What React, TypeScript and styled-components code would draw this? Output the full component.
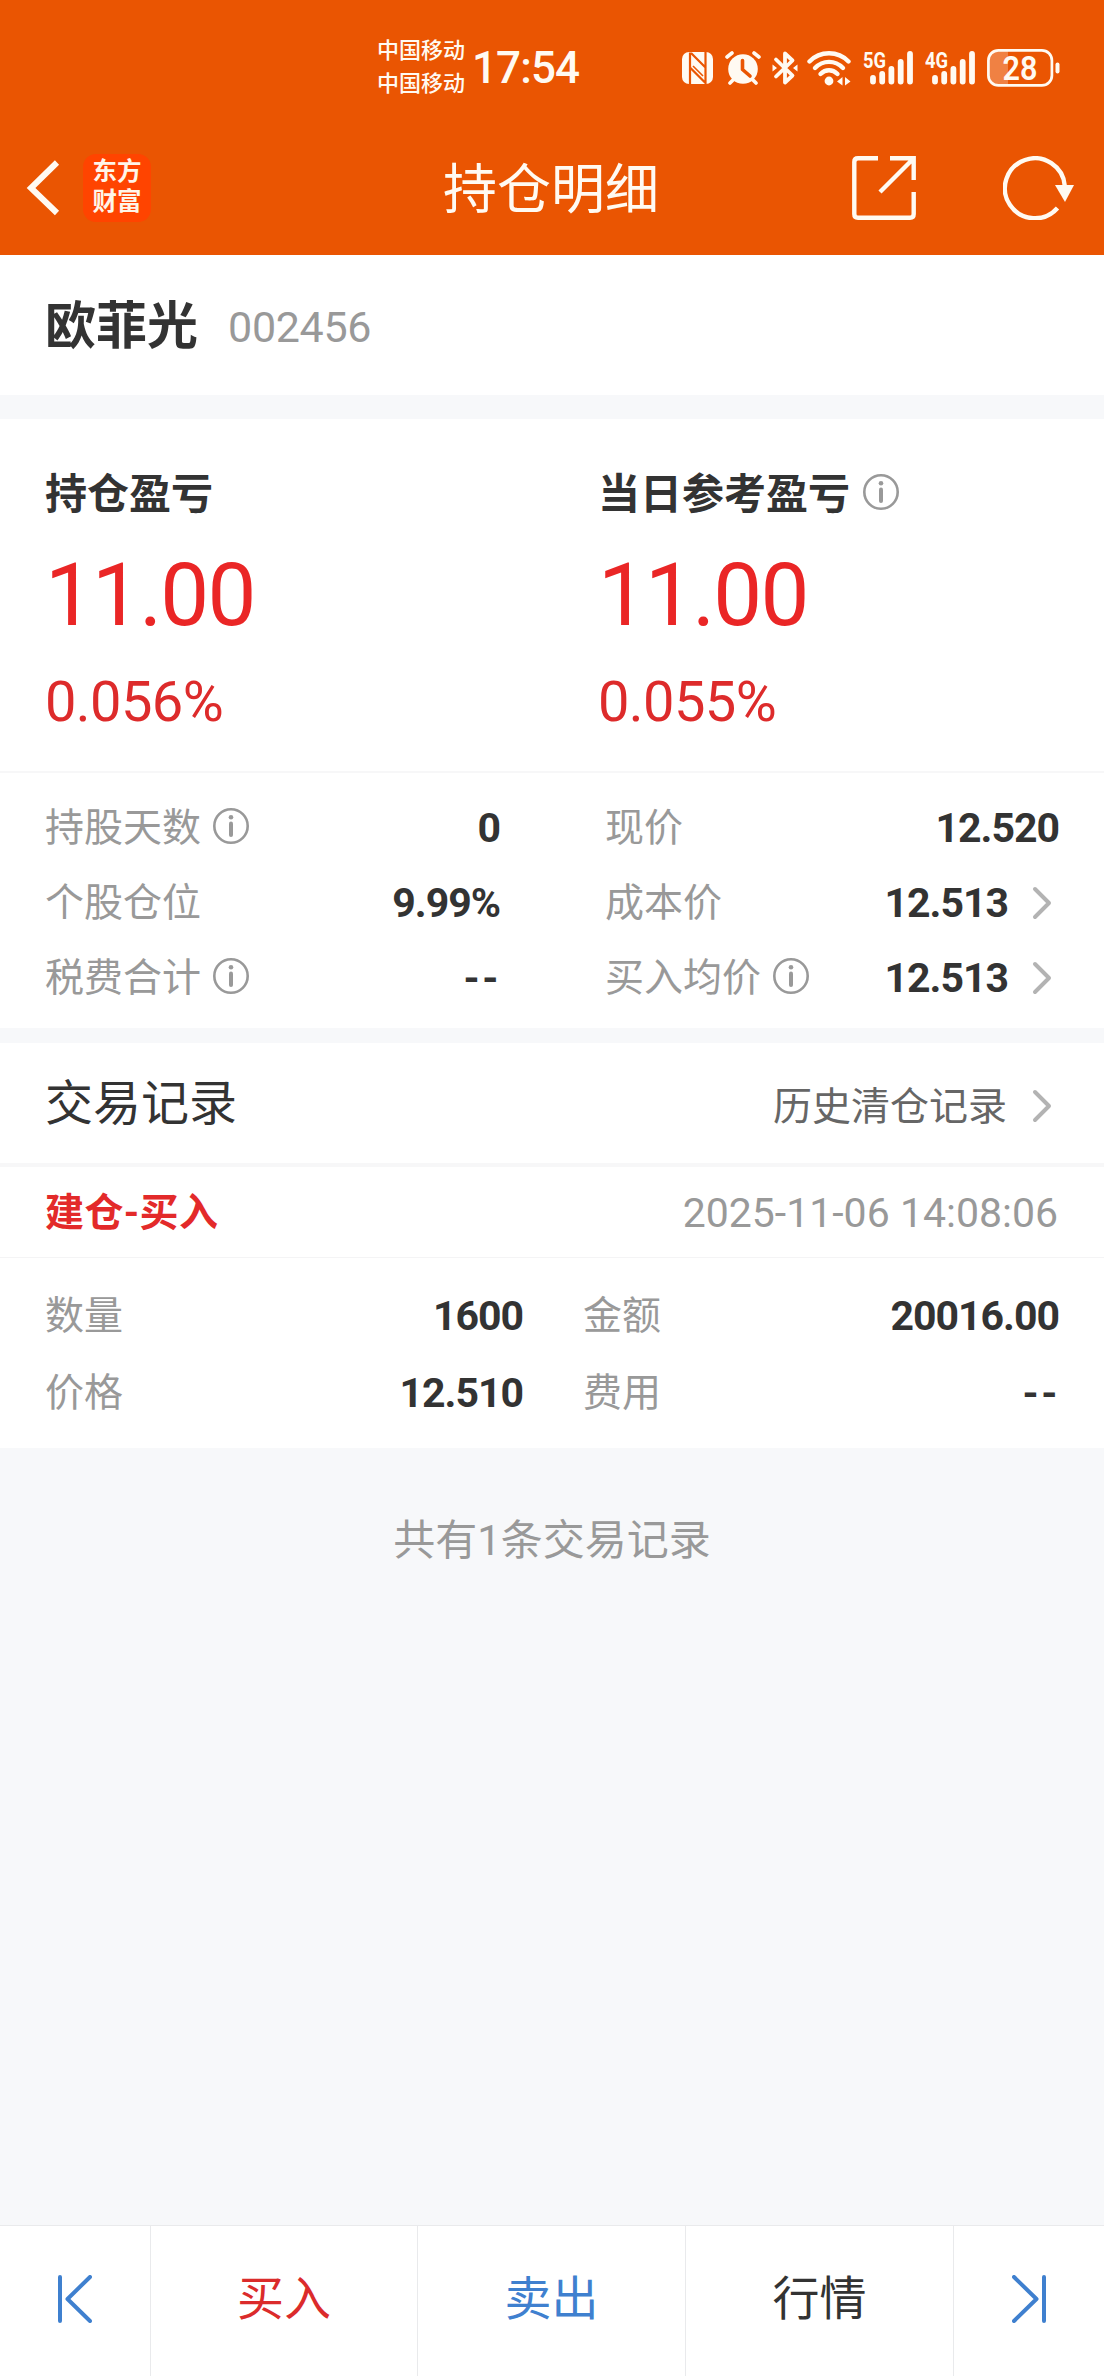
import React from "react";
import styled, { createGlobalStyle } from "styled-components";

const GlobalStyle = createGlobalStyle`
  * { box-sizing: border-box; }
  body {
    margin: 0;
    background: #f7f8fa;
    font-family: Roboto, "Noto Sans CJK SC", sans-serif;
    color: #333;
  }
  svg { display: block; flex: none; }
`;

const Page = styled.div`
  width: 1104px;
  height: 2376px;
  display: flex;
  flex-direction: column;
  background: #f7f8fa;
  overflow: hidden;
  white-space: nowrap;
`;

const Header = styled.header`
  height: 255px;
  background: #ea5502;
  color: #fffaf2;
  flex: none;
`;

const StatusBar = styled.div`
  height: 136px;
  padding: 0 44px 0 377px;
  display: flex;
  align-items: center;
`;

const Carriers = styled.div`
  width: 95px;
  font-size: 22px;
  line-height: 33px;
  font-weight: 500;
  padding-bottom: 3px;
`;

const Clock = styled.div`
  font-size: 44px;
  font-weight: 500;
  letter-spacing: -0.9px;
  line-height: 136px;
`;

const StatusIcons = styled.div`
  margin-left: auto;
  display: flex;
  align-items: center;
`;

const StatusSlot = styled.div<{ $gap: number }>`
  margin-right: ${(p) => p.$gap}px;
`;

const NavBar = styled.div`
  height: 103px;
  padding: 0 29px 0 26px;
  display: grid;
  grid-template-columns: 1fr auto 1fr;
  align-items: center;
`;

const NavLeft = styled.div`
  display: flex;
  align-items: center;
  gap: 23px;
`;

const Logo = styled.div`
  width: 68px;
  height: 68px;
  border-radius: 13px;
  background: #ff4400;
  color: #fff5e8;
  padding-top: 3px;
  font-weight: 700;
  font-size: 24.5px;
  line-height: 30px;
  text-align: center;
`;

const NavTitle = styled.h1`
  margin: 0;
  font-size: 54px;
  font-weight: 400;
  line-height: 68px;
  padding: 7px 0 0 1px;
`;

const NavRight = styled.div`
  display: flex;
  justify-content: flex-end;
  gap: 87px;
`;

const StockBar = styled.section`
  height: 140px;
  padding: 3px 46px 0 45px;
  display: flex;
  align-items: center;
  background: #fff;
`;

const StockName = styled.span`
  font-size: 51px;
  line-height: 60px;
  font-weight: 700;
`;

const StockCode = styled.span`
  margin-left: 30px;
  font-size: 43px;
  line-height: 60px;
  letter-spacing: -0.3px;
  color: #999;
`;

const Summary = styled.section`
  margin-top: 24px;
  height: 354px;
  padding: 0 46px 0 45px;
  display: grid;
  grid-template-columns: 553px 1fr;
  background: #fff;
  border-bottom: 2px solid #f7f7f8;
`;

const Profit = styled.div`
  padding-top: 49px;
  color: #ea2626;
`;

const ProfitTitle = styled.div`
  height: 48px;
  display: flex;
  align-items: center;
  gap: 13px;
  font-size: 42px;
  font-weight: 700;
  line-height: 48px;
  color: #333;
`;

const ProfitTitleText = styled.span`
  padding-top: 5px;
`;

const ProfitAmount = styled.div`
  margin-top: 27px;
  font-size: 87px;
  line-height: 104px;
  letter-spacing: -1.8px;
`;

const ProfitRate = styled.div`
  margin-top: 20px;
  font-size: 56px;
  line-height: 70px;
  letter-spacing: -0.6px;
  color: #dd2b2b;
`;

const Facts = styled.section`
  height: 255px;
  padding: 17px 46px 0 45px;
  display: grid;
  grid-template-columns: 454px 453px;
  grid-auto-rows: 75px;
  column-gap: 106px;
  background: #fff;
`;

const Field = styled.div`
  display: flex;
  align-items: center;
`;

const Label = styled.span`
  font-size: 39px;
  line-height: 48px;
  color: #999;
  margin-right: 12px;
`;

const InfoSlot = styled.span`
  padding-bottom: 3px;
`;

const Value = styled.span<{ $empty: boolean }>`
  margin-left: auto;
  margin-right: ${(p) => (p.$empty ? -2 : -1)}px;
  font-size: 41px;
  line-height: 48px;
  font-weight: 700;
  letter-spacing: ${(p) => (p.$empty ? 2.6 : -1)}px;
  color: #333;
`;

const ChevronSlot = styled.span`
  margin: 0 6px 0 25px;
`;

const RecordsHeader = styled.section`
  margin-top: 15px;
  height: 124px;
  padding: 1px 46px 0 45px;
  display: flex;
  align-items: center;
  justify-content: space-between;
  background: #fff;
  border-bottom: 4px solid #f7f7f8;
`;

const RecordsTitle = styled.h2`
  margin: 0;
  font-size: 48px;
  font-weight: 400;
  line-height: 60px;
`;

const HistoryLink = styled.a`
  padding-top: 4px;
  display: flex;
  align-items: center;
  font-size: 39px;
  line-height: 52px;
  color: #666;
`;

const HistoryText = styled.span`
  padding-top: 3px;
`;

const TradeHead = styled.div`
  height: 91px;
  padding: 1px 46px 0 45px;
  display: flex;
  align-items: center;
  justify-content: space-between;
  background: #fff;
  border-bottom: 1px solid #f4f4f5;
`;

const TradeType = styled.span`
  font-size: 39px;
  line-height: 48px;
  font-weight: 700;
  letter-spacing: 0.4px;
  color: #e32a2a;
`;

const TradeTime = styled.span`
  font-size: 41px;
  line-height: 48px;
  color: #999;
`;

const TradeBody = styled.div`
  height: 190px;
  padding: 19px 46px 0 45px;
  display: grid;
  grid-template-columns: 477px 475px;
  grid-auto-rows: 77px;
  column-gap: 61px;
  background: #fff;
`;

const Total = styled.p`
  margin: 0;
  padding-top: 66px;
  flex: 1;
  text-align: center;
  font-size: 42px;
  line-height: 54px;
  color: #999;
`;

const BottomBar = styled.nav`
  height: 151px;
  flex: none;
  display: grid;
  grid-template-columns: 151px 267px 268px 268px 1fr;
  background: #fff;
  border-top: 1px solid #e9eaec;
`;

const Tab = styled.div<{ $color: string }>`
  display: flex;
  align-items: center;
  justify-content: center;
  padding-bottom: 5px;
  font-size: 47px;
  line-height: 60px;
  color: ${(p) => p.$color};
  border-right: 1px solid #e9eaec;
  &:last-child { border-right: 0; }
`;

const NfcIcon = () => (
  <svg width="31" height="34" viewBox="0 0 31 34">
    <rect x="0" y="1" width="31" height="32" rx="7" fill="currentColor" />
    <path d="M8 1.5 L8 33 M9 2 L24 17 M23.5 1 L23.5 32 L8 16.5" fill="none" stroke="#ea5502" strokeWidth="2.2" />
    <path d="M11 15 L21 25" stroke="#ea5502" strokeWidth="1.6" />
  </svg>
);

const AlarmIcon = () => (
  <svg width="36" height="34" viewBox="0 0 36 34">
    <circle cx="18" cy="18" r="14.8" fill="currentColor" />
    <path d="M2 6 L7 2 M34 6 L29 2 M5 32 L9 28 M31 32 L27 28" stroke="currentColor" strokeWidth="3.6" strokeLinecap="round" />
    <path d="M17.5 9.5 V18.5 L25 25" fill="none" stroke="#ea5502" strokeWidth="3.6" strokeLinecap="round" strokeLinejoin="round" />
  </svg>
);

const BluetoothIcon = () => (
  <svg width="26" height="36" viewBox="0 0 26 36">
    <path d="M4 9.5 L20.5 25.5 L13 32.5 V3.5 L20.5 10.5 L4 26.5" fill="none" stroke="currentColor" strokeWidth="3.8" strokeLinecap="round" strokeLinejoin="round" />
    <path d="M0.5 14.5 L5 18 L0.5 21.5 Z M25.5 14.5 L21 18 L25.5 21.5 Z" fill="currentColor" />
  </svg>
);

const WifiIcon = () => (
  <svg width="44" height="35" viewBox="0 0 44 35">
    <g fill="none" stroke="currentColor" strokeWidth="4.4" strokeLinecap="round">
      <path d="M2.5 10.5 C13 -0.5 31 -0.5 41.5 10.5" />
      <path d="M8 17 C16 8.8 28 8.8 36 17" />
      <path d="M13.5 23 C18.5 18 25.5 18 30.5 23" />
    </g>
    <circle cx="22" cy="30" r="4.4" fill="currentColor" />
    <path d="M35.5 26 V34.5 L30 30.5 Z M38 26 V34.5 L43.5 30.5 Z" fill="currentColor" />
  </svg>
);

const SignalIcon = ({ network }: { network: string }) => (
  <svg width="50" height="46" viewBox="0 -5 50 46">
    <text x="0" y="17.5" fontSize="22.5" fontWeight="700" textLength="23" lengthAdjust="spacingAndGlyphs" fill="currentColor">
      {network}
    </text>
    <g stroke="currentColor" strokeWidth="5.8" strokeLinecap="round">
      <path d="M10 27.8 V31.5 M19.2 24 V31.5 M28.4 19 V31.5 M37.7 12 V31.5 M47 4 V31.5" />
    </g>
  </svg>
);

const BatteryIcon = () => (
  <svg width="73" height="38" viewBox="0 0 73 38">
    <path d="M12 2 H21 V36 H12 Q2 36 2 26 V12 Q2 2 12 2 Z" fill="#f08143" />
    <rect x="1.4" y="1.4" width="63.5" height="35" rx="10" fill="none" stroke="currentColor" strokeWidth="2.7" />
    <path d="M70.5 15.5 V22.500" stroke="currentColor" strokeWidth="4" strokeLinecap="round" />
    <text x="33" y="30.500" fontSize="33" fontWeight="600" textAnchor="middle" textLength="35" lengthAdjust="spacingAndGlyphs" fill="currentColor">28</text>
  </svg>
);

const BackIcon = () => (
  <svg width="34" height="58" viewBox="0 0 34 58">
    <path d="M31 3.500 L5 29 L31 54" fill="none" stroke="currentColor" strokeWidth="6" />
  </svg>
);

const ShareIcon = () => (
  <svg width="64" height="64" viewBox="0 0 64 64">
    <path d="M26 2.300 H6 Q2.300 2.300 2.300 6 V58 Q2.300 61.700 6 61.700 H58 Q61.700 61.700 61.700 58 V36 M38 2.300 H61.700 V24 M61 3 L28 36" fill="none" stroke="currentColor" strokeWidth="4.400" />
  </svg>
);

const RefreshIcon = () => (
  <svg width="72" height="64" viewBox="0 0 72 64">
    <path d="M54.500 52 A30 30 0 1 1 61.800 30" fill="none" stroke="currentColor" strokeWidth="4.400" />
    <path d="M52 29 H71 L62 46 Z" fill="currentColor" />
  </svg>
);

const InfoIcon = () => (
  <svg width="36" height="36" viewBox="0 0 36 36">
    <circle cx="18" cy="18" r="16.700" fill="none" stroke="#999" strokeWidth="2.600" />
    <circle cx="18" cy="9.200" r="2.300" fill="#999" />
    <path d="M18 15.500 V27" stroke="#999" strokeWidth="4" strokeLinecap="round" />
  </svg>
);

const Chevron = () => (
  <svg width="20" height="34" viewBox="0 0 20 34">
    <path d="M3 3 L17 17 L3 31" fill="none" stroke="#b3b3b3" strokeWidth="4" strokeLinecap="round" strokeLinejoin="round" />
  </svg>
);

const StepIcon = ({ forward }: { forward?: boolean }) => (
  <svg width="34" height="48" viewBox="0 0 34 48">
    <path
      d={forward ? "M32 2 V46 M2 2 L24.500 24 L2 46" : "M2 2 V46 M32 2 L9.500 24 L32 46"}
      fill="none"
      stroke="currentColor"
      strokeWidth="4"
      strokeLinecap="round"
      strokeLinejoin="round"
    />
  </svg>
);

type FieldData = { label: string; value: string; info?: boolean; link?: boolean };

const facts: FieldData[] = [
  { label: "持股天数", value: "0", info: true },
  { label: "现价", value: "12.520" },
  { label: "个股仓位", value: "9.99%" },
  { label: "成本价", value: "12.513", link: true },
  { label: "税费合计", value: "--", info: true },
  { label: "买入均价", value: "12.513", info: true, link: true },
];

const trade: FieldData[] = [
  { label: "数量", value: "1600" },
  { label: "金额", value: "20016.00" },
  { label: "价格", value: "12.510" },
  { label: "费用", value: "--" },
];

const FieldRow = ({ label, value, info, link }: FieldData) => (
  <Field>
    <Label>{label}</Label>
    {info && (
      <InfoSlot>
        <InfoIcon />
      </InfoSlot>
    )}
    <Value $empty={value === "--"}>{value}</Value>
    {link && (
      <ChevronSlot>
        <Chevron />
      </ChevronSlot>
    )}
  </Field>
);

export default function App() {
  return (
    <>
      <GlobalStyle />
      <Page>
        <Header>
          <StatusBar>
            <Carriers>
              <div>中国移动</div>
              <div>中国移动</div>
            </Carriers>
            <Clock>17:54</Clock>
            <StatusIcons>
              <StatusSlot $gap={12}><NfcIcon /></StatusSlot>
              <StatusSlot $gap={11}><AlarmIcon /></StatusSlot>
              <StatusSlot $gap={9}><BluetoothIcon /></StatusSlot>
              <StatusSlot $gap={12}><WifiIcon /></StatusSlot>
              <StatusSlot $gap={12}><SignalIcon network="5G" /></StatusSlot>
              <StatusSlot $gap={12}><SignalIcon network="4G" /></StatusSlot>
              <BatteryIcon />
            </StatusIcons>
          </StatusBar>
          <NavBar>
            <NavLeft>
              <BackIcon />
              <Logo>
                <div>东方</div>
                <div>财富</div>
              </Logo>
            </NavLeft>
            <NavTitle>持仓明细</NavTitle>
            <NavRight>
              <ShareIcon />
              <RefreshIcon />
            </NavRight>
          </NavBar>
        </Header>

        <StockBar>
          <StockName>欧菲光</StockName>
          <StockCode>002456</StockCode>
        </StockBar>

        <Summary>
          <Profit>
            <ProfitTitle>
              <ProfitTitleText>持仓盈亏</ProfitTitleText>
            </ProfitTitle>
            <ProfitAmount>11.00</ProfitAmount>
            <ProfitRate>0.056%</ProfitRate>
          </Profit>
          <Profit>
            <ProfitTitle>
              <ProfitTitleText>当日参考盈亏</ProfitTitleText>
              <InfoIcon />
            </ProfitTitle>
            <ProfitAmount>11.00</ProfitAmount>
            <ProfitRate>0.055%</ProfitRate>
          </Profit>
        </Summary>

        <Facts>
          {facts.map((f) => (
            <FieldRow key={f.label} {...f} />
          ))}
        </Facts>

        <RecordsHeader>
          <RecordsTitle>交易记录</RecordsTitle>
          <HistoryLink>
            <HistoryText>历史清仓记录</HistoryText>
            <ChevronSlot>
              <Chevron />
            </ChevronSlot>
          </HistoryLink>
        </RecordsHeader>

        <TradeHead>
          <TradeType>建仓-买入</TradeType>
          <TradeTime>2025-11-06 14:08:06</TradeTime>
        </TradeHead>
        <TradeBody>
          {trade.map((f) => (
            <FieldRow key={f.label} {...f} />
          ))}
        </TradeBody>

        <Total>共有1条交易记录</Total>

        <BottomBar>
          <Tab $color="#3f80cf"><StepIcon /></Tab>
          <Tab $color="#db2b2b">买入</Tab>
          <Tab $color="#3f80cf">卖出</Tab>
          <Tab $color="#333">行情</Tab>
          <Tab $color="#3f80cf"><StepIcon forward /></Tab>
        </BottomBar>
      </Page>
    </>
  );
}
